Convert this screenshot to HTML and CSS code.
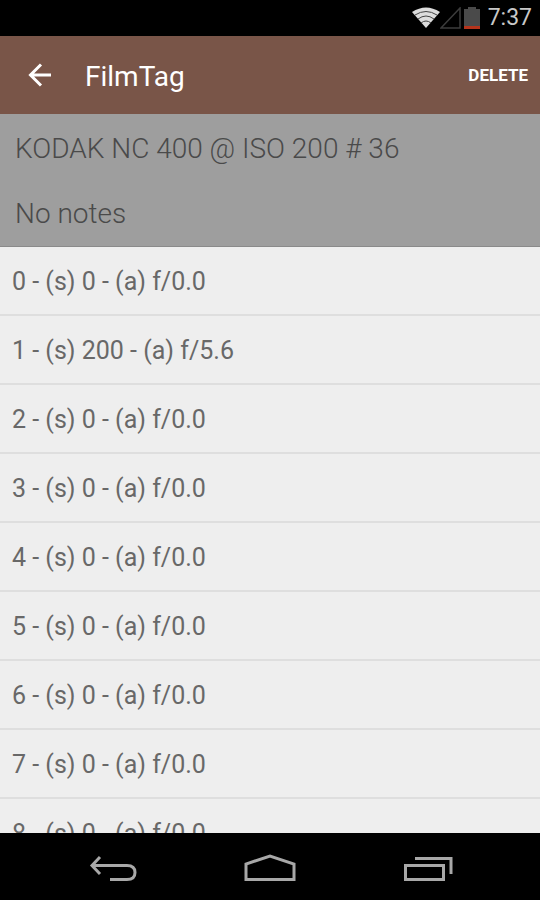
FILE: index.html
```html
<!DOCTYPE html>
<html lang="en">
  <head>
    <meta charset="utf-8">
    <meta name="viewport" content="width=device-width, initial-scale=1">
    <title>FilmTag</title>
    <link rel="stylesheet" href="styles.css">
  </head>
  <body>
    <div class="status-bar">
      <div class="status-icons">
        <svg width="28" height="22" viewBox="0 0 28 22">
          <path d="M0 5Q14-4 28 5L14 21Z" fill="#dcdcdc"/>
          <path d="M3 8Q14 1 25 8M6 12Q14 6 22 12M9 16Q14 12 19 16" fill="none" stroke="#444" stroke-width="1"/>
        </svg>
        <svg width="22" height="22" viewBox="0 0 22 22">
          <path d="M1 21L20 1V21Z" fill="none" stroke="#3c3c3c" stroke-width="1.5"/>
        </svg>
        <svg class="battery" width="16" height="22" viewBox="0 0 16 22">
          <path d="M0 2H4V0H12V2H16V22H0Z" fill="#4a4a4a"/>
          <path d="M0 19H16V22H0Z" fill="#b5341c"/>
        </svg>
      </div>
      <span class="clock">7:37</span>
    </div>
    <header class="app-bar">
      <button type="button" class="back-button" aria-label="Back">
        <svg width="24" height="24" viewBox="0 0 24 24">
          <path d="M23 12H3M13 1.500L2.500 12L13 22.500" fill="none" stroke="#fff" stroke-width="3"/>
        </svg>
      </button>
      <h1>FilmTag</h1>
      <button type="button" class="delete-button">DELETE</button>
    </header>
    <section class="film-info">
      <p>KODAK NC 400 @ ISO 200 # 36</p>
      <p>No notes</p>
    </section>
    <ul class="shots">
      <li>0 - (s) 0 - (a) f/0.0</li>
      <li>1 - (s) 200 - (a) f/5.6</li>
      <li>2 - (s) 0 - (a) f/0.0</li>
      <li>3 - (s) 0 - (a) f/0.0</li>
      <li>4 - (s) 0 - (a) f/0.0</li>
      <li>5 - (s) 0 - (a) f/0.0</li>
      <li>6 - (s) 0 - (a) f/0.0</li>
      <li>7 - (s) 0 - (a) f/0.0</li>
      <li>8 - (s) 0 - (a) f/0.0</li>
    </ul>
    <nav class="nav-bar">
      <button type="button" aria-label="Back">
        <svg width="52" height="30" viewBox="0 0 52 30">
          <path d="M5 11.500H40Q48 11.500 48 18.500Q48 25.500 40 25.500H23M13 3L5 11.500L13 20" fill="none" stroke="#a8a8a8" stroke-width="3"/>
        </svg>
      </button>
      <button type="button" aria-label="Home">
        <svg width="52" height="30" viewBox="0 0 52 30">
          <path d="M2 25.500V10L26 2L50 10V25.500Z" fill="none" stroke="#a8a8a8" stroke-width="3"/>
        </svg>
      </button>
      <button type="button" aria-label="Recent apps">
        <svg width="52" height="30" viewBox="0 0 52 30">
          <path d="M4.500 11.500H42.500V25.500H4.500ZM14 4.500H50V20" fill="none" stroke="#a8a8a8" stroke-width="3"/>
        </svg>
      </button>
    </nav>
  </body>
</html>
```
FILE: styles.css
```css
* {
  box-sizing: border-box;
}
body {
  display: flex;
  flex-direction: column;
  height: 100vh;
  margin: 0;
  background: #eee;
  color: #686868;
  font-family: Roboto, sans-serif;
}
button {
  display: flex;
  align-items: center;
  justify-content: center;
  padding: 0;
  border: none;
  background: none;
  color: inherit;
  font-family: inherit;
  cursor: pointer;
}
svg {
  display: block;
}
.status-bar {
  display: flex;
  flex: none;
  align-items: center;
  justify-content: flex-end;
  gap: 8px;
  height: 36px;
  padding: 0 8px;
  background: #000;
  color: #c8c8c8;
}
.status-icons {
  display: flex;
}
.battery {
  margin-left: 2px;
}
.clock {
  font-size: 23px;
  line-height: 36px;
}
.app-bar {
  display: flex;
  flex: none;
  align-items: center;
  height: 78px;
  padding: 0 12px;
  background: #795548;
  color: #fff;
}
.back-button {
  width: 56px;
  height: 56px;
}
.app-bar h1 {
  flex: 1;
  margin: 0;
  padding: 4px 0 0 17px;
  font-size: 28px;
  font-weight: 400;
  line-height: 40px;
}
.delete-button {
  height: 56px;
  font-size: 17px;
  font-weight: 700;
}
.film-info {
  flex: none;
  padding: 2px 15px 0;
  border-bottom: 1px solid #8a8a8a;
  background: #9e9e9e;
  color: #4a4a4a;
  font-size: 28px;
  font-weight: 300;
}
.film-info p {
  margin: 0;
  line-height: 65px;
}
.shots {
  flex: 1;
  min-height: 0;
  margin: 0;
  padding: 0;
  overflow: hidden;
  list-style: none;
}
.shots li {
  padding: 2px 12px 0;
  border-bottom: 2px solid #dedede;
  font-size: 25px;
  line-height: 65px;
}
.nav-bar {
  display: grid;
  flex: none;
  grid-template-columns: repeat(3, 1fr);
  height: 67px;
  padding: 4px 34px 0;
  background: #000;
}
```
